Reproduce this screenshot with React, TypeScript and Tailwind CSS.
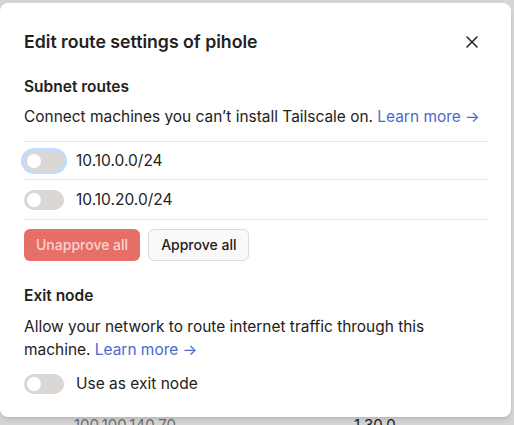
import React, { useState } from 'react';

const font = { fontFamily: 'Inter, "Noto Sans", sans-serif' };

function Toggle({ focused = false }: { focused?: boolean }) {
  return (
    <span
      className={`flex h-5 w-10 shrink-0 items-center rounded-full bg-[#dad7d5] px-[3px] ${
        focused ? 'ring-[3px] ring-[#c4dcfb]' : ''
      }`}
    >
      <span className="h-[14px] w-[14px] rounded-full bg-white" />
    </span>
  );
}

function LearnMore() {
  return <a className="text-[#4c68cf]">Learn more →</a>;
}

export default function App() {
  const [routes] = useState(['10.10.0.0/24', '10.10.20.0/24']);

  return (
    <div className="relative h-[425px] w-[514px] overflow-hidden bg-[#d6d6d6] text-[#232120]" style={font}>
      {/* page behind the overlay */}
      <div className="flex pt-[414px] text-[15px]">
        <span className="ml-[74px] text-[#6f6f6f]">100.100.140.70</span>
        <span className="ml-[178px] text-[#1b1b1b]">1.30.0</span>
      </div>

      <div className="absolute left-0 top-[3px] h-[414px] w-[511px] rounded-lg bg-white px-6 pt-[25px] shadow-md">
        <div className="flex h-7 items-center justify-between">
          <h1 className="text-[17.7px] font-semibold">Edit route settings of pihole</h1>
          <svg width="14" height="14" viewBox="0 0 14 14" className="mr-[8px]" fill="none" stroke="#2a2827" strokeWidth="1.6" strokeLinecap="round">
            <path d="M2 2L12 12M12 2L2 12" />
          </svg>
        </div>

        <h2 className="mt-[19px] text-[15.5px] font-semibold leading-6">Subnet routes</h2>
        <p className="mt-[6px] whitespace-nowrap text-[15.45px] leading-6">
          Connect machines you can’t install Tailscale on. <LearnMore />
        </p>

        <div className="mr-[-1px] mt-3 border-t border-[#e9e7e6]">
          {routes.map((r, i) => (
            <div key={r} className={`flex items-center gap-3 border-b border-[#e9e7e6] ${i === 0 ? 'h-[38px]' : 'h-[40px]'}`}>
              <Toggle focused={i === 0} />
              <span className="text-[15.5px]">{r}</span>
            </div>
          ))}
        </div>

        <div className="mt-[9px] flex gap-2">
          <button className="h-8 rounded-md bg-[#e66f67] px-3 text-sm font-medium text-[#fbd3d0]">Unapprove all</button>
          <button className="h-8 rounded-md border border-[#dddad8] bg-[#faf9f8] px-3 text-sm font-medium">Approve all</button>
        </div>

        <h2 className="mt-[23px] text-[15.5px] font-semibold leading-6">Exit node</h2>
        <p className="mt-[7px] w-[440px] text-[15.45px] leading-[23px]">
          Allow your network to route internet traffic through this machine. <LearnMore />
        </p>

        <div className="mt-[11px] flex items-center gap-3">
          <Toggle />
          <span className="text-[15.5px]">Use as exit node</span>
        </div>
      </div>
    </div>
  );
}
